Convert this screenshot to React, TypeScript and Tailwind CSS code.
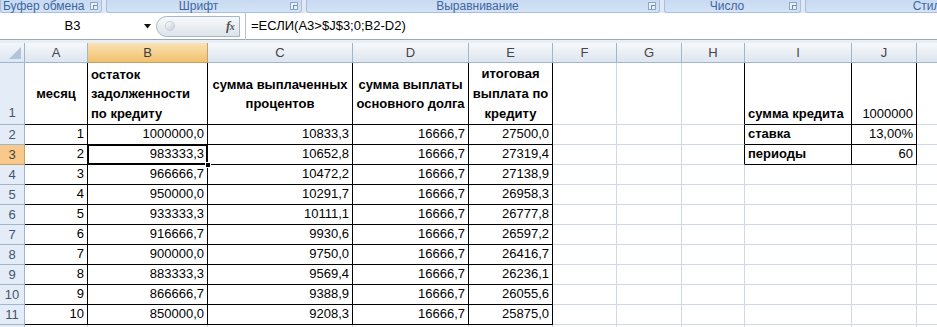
import React from 'react';

const FONT = { fontFamily: '"Liberation Sans", Arial, sans-serif' };

const COLS = ['A', 'B', 'C', 'D', 'E', 'F', 'G', 'H', 'I', 'J', 'K'];

const DATA: string[][] = [
  ['1', '1000000,0', '10833,3', '16666,7', '27500,0'],
  ['2', '983333,3', '10652,8', '16666,7', '27319,4'],
  ['3', '966666,7', '10472,2', '16666,7', '27138,9'],
  ['4', '950000,0', '10291,7', '16666,7', '26958,3'],
  ['5', '933333,3', '10111,1', '16666,7', '26777,8'],
  ['6', '916666,7', '9930,6', '16666,7', '26597,2'],
  ['7', '900000,0', '9750,0', '16666,7', '26416,7'],
  ['8', '883333,3', '9569,4', '16666,7', '26236,1'],
  ['9', '866666,7', '9388,9', '16666,7', '26055,6'],
  ['10', '850000,0', '9208,3', '16666,7', '25875,0'],
];

const SIDE: Record<number, [string, string]> = {
  1: ['сумма кредита', '1000000'],
  2: ['ставка', '13,00%'],
  3: ['периоды', '60'],
};

// black-bordered areas: A1:E11 and I1:J3
const inBlack = (r: number, c: number) =>
  (r >= 1 && r <= 11 && c >= 1 && c <= 5) || (r >= 1 && r <= 3 && (c === 9 || c === 10));

function Launcher() {
  return (
    <span className="inline-flex w-[8px] h-[8px] border border-[#8ea6c6] bg-[#e8f0fa] items-end justify-end">
      <span className="w-[4px] h-[4px] border-l border-t border-[#6f8bb3]" />
    </span>
  );
}

function RibbonGroup({ label, w, launcher = true, align = 'center' }: { label: string; w: string; launcher?: boolean; align?: string }) {
  return (
    <div className={`${w} h-[13px] shrink-0 rounded-b-[3px] bg-gradient-to-b from-[#c7daf1] to-[#d4e3f5] border-x border-b border-[#a7bfdd] flex items-center relative`}>
      <span className={`flex-1 text-[12px] leading-[12px] text-[#3e66a3] whitespace-nowrap ${align === 'left' ? 'pl-[2px]' : 'text-center'}`}>{label}</span>
      {launcher && <span className="mr-[3px] flex"><Launcher /></span>}
    </div>
  );
}

function Cell({ r, c }: { r: number; c: number }) {
  const black = inBlack(r, c);
  const rightBlack = black || inBlack(r, c + 1);
  const bottomBlack = black || inBlack(r + 1, c);
  const br = rightBlack ? 'border-r-black' : 'border-r-[#d0d7e5]';
  const bb = bottomBlack ? 'border-b-black' : 'border-b-[#d0d7e5]';
  let content: React.ReactNode = null;
  let align = 'items-end justify-end';

  if (r === 1) {
    if (c === 1) { content = <b>месяц</b>; align = 'items-center justify-center'; }
    if (c === 2) {
      content = <b className="block leading-[19.5px] pl-[3px] pb-[1px]">остаток<br />задолженности<br />по кредиту</b>;
      align = 'items-end justify-start';
    }
    if (c === 3) { content = <b className="block text-center leading-[19px]">сумма выплаченных<br />процентов</b>; align = 'items-center justify-center'; }
    if (c === 4) { content = <b className="block text-center leading-[19px]">сумма выплаты<br />основного долга</b>; align = 'items-center justify-center'; }
    if (c === 5) { content = <b className="block text-center leading-[20px]">итоговая<br />выплата по<br />кредиту</b>; align = 'items-center justify-center'; }
  } else if (r >= 2 && r <= 11 && c >= 1 && c <= 5) {
    content = <span className="pr-[3px] pb-[1px]">{DATA[r - 2][c - 1]}</span>;
  }
  if (SIDE[r] && c === 9) { content = <b className="pl-[3px] pb-[1px]">{SIDE[r][0]}</b>; align = 'items-end justify-start'; }
  if (SIDE[r] && c === 10) { content = <span className="pr-[3px] pb-[1px]">{SIDE[r][1]}</span>; }

  const selected = r === 3 && c === 2;
  return (
    <div className={`relative flex ${align} border-r border-b ${br} ${bb} bg-white text-[13px] text-black whitespace-nowrap`}>
      {content}
      {selected && (
        <>
          <div className="absolute -left-[1px] -top-[1px] -right-[1px] -bottom-[1px] border-2 border-black pointer-events-none" />
          <div className="absolute -right-[4px] -bottom-[4px] w-[6px] h-[6px] bg-black border border-white z-10" />
        </>
      )}
    </div>
  );
}

export default function App() {
  const rows = Array.from({ length: 12 }, (_, i) => i + 1);
  return (
    <div className="w-[937px] h-[327px] overflow-hidden bg-white" style={FONT}>
      {/* ribbon group captions */}
      <div className="h-[13px] flex gap-[4px] bg-[#dfe9f6] overflow-hidden">
        <RibbonGroup label="Буфер обмена" w="w-[102px]" align="left" />
        <RibbonGroup label="Шрифт" w="w-[196px]" />
        <RibbonGroup label="Выравнивание" w="w-[354px]" />
        <RibbonGroup label="Число" w="w-[137px]" />
        <RibbonGroup label="Стили" w="w-[250px]" launcher={false} />
      </div>

      {/* formula bar */}
      <div className="h-[27px] flex items-center border-b border-[#9aa7b8] bg-white">
        <div className="w-[156px] h-[21px] flex items-center">
          <span className="flex-1 text-center text-[13px] text-black pl-[2px]">B3</span>
          <svg width="9" height="5" viewBox="0 0 9 5" className="mr-[4px]"><path d="M1 0h7L4.5 4.5z" fill="#111" /></svg>
        </div>
        <div className="w-[84px] h-[21px] rounded-l-full border border-[#a9b6c6] bg-gradient-to-b from-[#f7f9fb] to-[#dde3ea] flex items-center">
          <span className="ml-[8px] w-[10px] h-[10px] rounded-full bg-gradient-to-br from-white to-[#c5ced9] border border-[#c3ccd7]" />
          <span className="ml-auto mr-[5px] text-[13px] italic font-bold text-[#555] tracking-tighter" style={{ fontFamily: '"Liberation Serif", serif' }}>f<span className="text-[10px]">x</span></span>
        </div>
        <div className="w-[5px]" />
        <div className="h-[27px] border-l border-[#b6c2d1] flex items-center pl-[5px] text-[13px] text-black whitespace-nowrap">
          =ЕСЛИ(A3&gt;$J$3;0;B2-D2)
        </div>
      </div>

      <div className="h-[3px] bg-[#e9eef5]" />

      {/* sheet grid */}
      <div className="grid grid-cols-[25px_63px_120px_145px_116px_84px_64px_65px_63px_107px_65px_64px] grid-rows-[20px_62px_repeat(11,20px)]">
        <div className="relative border-r border-b border-[#9eb6ce] bg-gradient-to-b from-[#f3f6fb] to-[#dde6f2]">
          <svg width="12" height="12" viewBox="0 0 12 12" className="absolute right-[3px] bottom-[3px]"><path d="M12 0V12H0z" fill="#b3c3d8" /></svg>
        </div>
        {COLS.map((l, i) => (
          <div
            key={l}
            className={`flex items-center justify-center border-r border-b text-[13px] ${i === 1
              ? 'bg-gradient-to-b from-[#fae2b2] to-[#f1c16d] border-[#c2a26a] text-[#3b3b3b]'
              : 'bg-gradient-to-b from-[#f6f8fb] to-[#dee5ef] border-[#9eb6ce] text-[#454545]'}`}
          >
            {l === 'K' ? '' : l}
          </div>
        ))}
        {rows.map((r) => (
          <React.Fragment key={r}>
            <div
              className={`flex items-center justify-center border-r border-b text-[13px] ${r === 3
                ? 'bg-[#f8c98a] border-[#c2a26a] text-[#444]'
                : 'bg-[#e4ecf7] border-[#9eb6ce] text-[#44536a]'} ${r === 1 ? 'items-end pb-[2px]' : ''}`}
            >
              {r === 12 ? '' : r}
            </div>
            {COLS.map((_, ci) => <Cell key={ci} r={r} c={ci + 1} />)}
          </React.Fragment>
        ))}
      </div>
    </div>
  );
}
